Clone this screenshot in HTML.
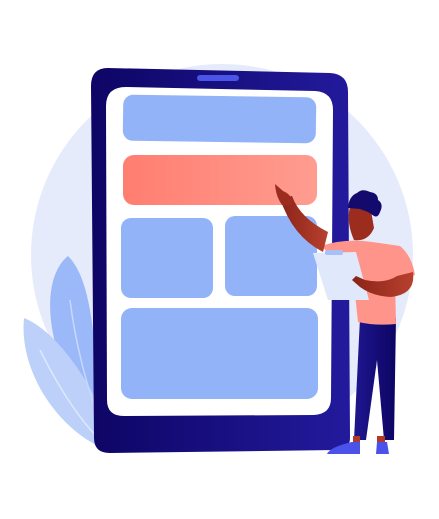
<!DOCTYPE html>
<html><head><meta charset="utf-8"><style>html,body{margin:0;padding:0;background:#fff}svg{display:block}</style></head>
<body>
<svg width="439" height="519" viewBox="0 0 439 519" xmlns="http://www.w3.org/2000/svg">
<defs>
<linearGradient id="ph" x1="0" x2="1" y1="0" y2="0"><stop offset="0" stop-color="#0e0565"/><stop offset="1" stop-color="#221a9c"/></linearGradient>
<linearGradient id="sal" x1="0" x2="1"><stop offset="0" stop-color="#ff7e70"/><stop offset="1" stop-color="#ff9c90"/></linearGradient>
<linearGradient id="arm" x1="0" x2="1"><stop offset="0" stop-color="#8a2418"/><stop offset="1" stop-color="#b8402e"/></linearGradient>
<linearGradient id="pants" x1="0" x2="1"><stop offset="0" stop-color="#1e168f"/><stop offset="1" stop-color="#0d0563"/></linearGradient>
</defs>
<circle cx="222" cy="255" r="191" fill="#e5ebfb"/>
<path d="M68 256 C38 280 45 360 95 420 L100 415 C95 340 92 280 68 256Z" fill="#9bb8f8"/>
<path d="M24 318 C18 380 70 440 110 450 L105 420 C90 380 55 330 24 318Z" fill="#bcd0fa"/>
<path d="M40 350 C60 390 80 420 100 440" stroke="#dfe8fd" stroke-width="1.5" fill="none"/>
<path d="M70 300 C75 340 85 380 96 410" stroke="#c8d8fc" stroke-width="1.5" fill="none"/>
<path d="M108 68 L330 73 Q348 74 348 92 L350 438 Q350 450 336 450 L110 453 Q94 453 94 438 L91 86 Q91 68 108 68Z" fill="url(#ph)"/>
<rect x="197" y="75" width="42" height="6" rx="3" fill="#4a54e6"/>
<path d="M126 87 L315 91 Q333 92 333 110 L331 398 Q331 414 314 415 L124 416 Q107 416 107 400 L106 106 Q106 87 126 87Z" fill="#fff"/>
<rect x="123" y="96" width="193" height="46" rx="10" fill="#93b3f8" transform="rotate(0.8 220 120)"/>
<rect x="123" y="155" width="194" height="50" rx="11" fill="url(#sal)"/>
<rect x="121" y="218" width="92" height="80" rx="10" fill="#93b3f8"/>
<rect x="225" y="216" width="92" height="80" rx="10" fill="#93b3f8"/>
<rect x="121" y="308" width="197" height="91" rx="11" fill="#93b3f8"/>
<path d="M360 318 L396 318 L394 440 L384 440 L377 360 L366 440 L354 440Z" fill="url(#pants)"/>
<rect x="353" y="436" width="7" height="6" fill="#b0392a"/>
<rect x="377" y="436" width="8" height="6" fill="#b0392a"/>
<path d="M352 442 L360 442 L360 454 L327 454 Q330 447 352 442Z" fill="#4a52ea"/>
<path d="M377 442 L387 442 L389 454 L376 454Z" fill="#4a52ea"/>
<path d="M321 246 Q345 238 372 242 L400 246 Q412 256 415 275 L395 280 L396 324 Q376 326 358 322 L353 275 Z" fill="#ff948a"/>
<path d="M280 198 L292 196 Q300 218 328 232 L323 252 Q292 236 280 198Z" fill="url(#arm)"/>
<path d="M275 184 L283 191 Q293 195 292 205 L283 206 Q276 198 275 184Z" fill="#9b2c1e"/>
<path d="M350 207 Q357 200 370 205 L374 228 Q368 242 354 240 Q346 222 350 207Z" fill="#9b2c1e"/>
<path d="M348 208 Q349 196 357 193 Q362 188 370 192 Q378 193 378 200 Q384 204 380 212 Q378 218 374 216 L368 212 L360 209 Z" fill="#140a6e"/>
<path d="M313 253 L356 252 L369 300 L328 300Z" fill="#e0e8fb"/>
<rect x="325" y="250" width="18" height="5" rx="2" fill="#a9c0f6"/>
<path d="M413 272 Q416 295 390 297 Q372 296 360 287 L352 280 L356 276 L365 280 Q385 284 397 276Z" fill="url(#arm)"/>
</svg>
</body></html>
